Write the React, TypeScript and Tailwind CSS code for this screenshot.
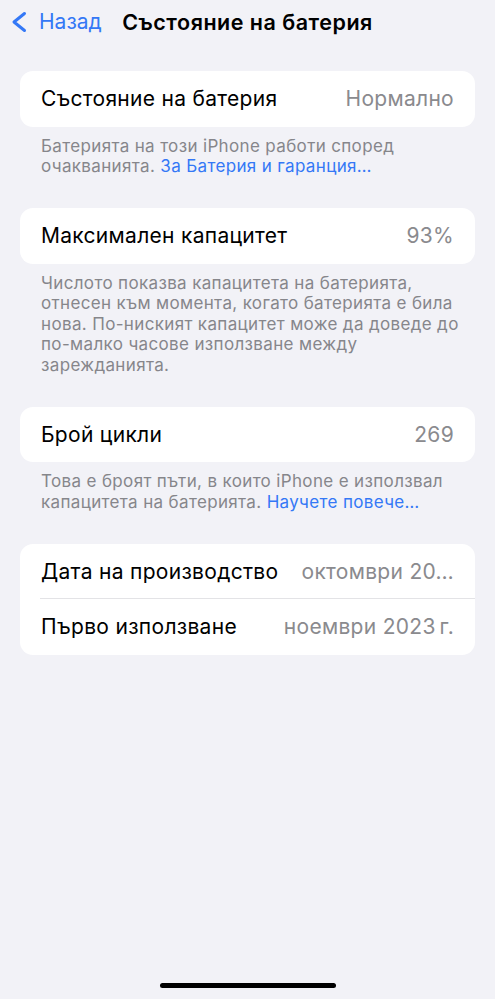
import React from 'react';

const font = { fontFamily: 'Inter, "Noto Sans", "Liberation Sans", sans-serif' };

function Row({ label, value, divider }: { label: string; value: string; divider?: boolean }) {
  return (
    <div className="relative flex h-[55.5px] items-center justify-between pl-[21px] pr-[21px]">
      <span className="text-[21px] tracking-[0.3px] text-black whitespace-nowrap">{label}</span>
      <span className="text-[21px] tracking-[0.3px] text-[#8a8a8e] whitespace-nowrap">{value}</span>
      {divider && <div className="absolute bottom-0 left-[20px] right-0 h-px bg-[#e3e3e6]" />}
    </div>
  );
}

function Card({ children }: { children: React.ReactNode }) {
  return <div className="overflow-hidden rounded-[13px] bg-white">{children}</div>;
}

function Footer({ children }: { children: React.ReactNode }) {
  return (
    <p className="mt-[9px] mb-[31.5px] px-[21px] text-[17px] leading-[20.5px] tracking-[0.35px] text-[#86868b] whitespace-nowrap">
      {children}
    </p>
  );
}

export default function App() {
  return (
    <div lang="bg" style={font} className="flex h-[999px] w-full flex-col bg-[#f2f2f7]">
      {/* Navigation bar */}
      <div className="grid h-[44px] grid-cols-[1fr_auto_1fr] items-center">
        <button className="flex items-center gap-[12px] pl-[11px] text-[#3478f6]">
          <svg width="16" height="22" viewBox="0 0 16 22" fill="none">
            <path d="M13.5 2.5 3 11l10.5 8.5" stroke="currentColor" strokeWidth="3" strokeLinecap="round" strokeLinejoin="round" />
          </svg>
          <span className="text-[21px]">Назад</span>
        </button>
        <h1 className="text-[21.5px] font-semibold tracking-[0.5px] text-black">Състояние на батерия</h1>
        <div />
      </div>

      {/* Content */}
      <div className="mt-[27px] px-[20px]">
        <Card>
          <Row label="Състояние на батерия" value="Нормално" />
        </Card>
        <Footer>
          Батерията на този iPhone работи според
          <br />
          очакванията. <span className="text-[#3478f6]">За Батерия и гаранция…</span>
        </Footer>

        <Card>
          <Row label="Максимален капацитет" value="93%" />
        </Card>
        <Footer>
          Числото показва капацитета на батерията,
          <br />
          отнесен към момента, когато батерията е била
          <br />
          нова. По-ниският капацитет може да доведе до
          <br />
          по-малко часове използване между
          <br />
          зарежданията.
        </Footer>

        <Card>
          <Row label="Брой цикли" value="269" />
        </Card>
        <Footer>
          Това е броят пъти, в които iPhone е използвал
          <br />
          капацитета на батерията. <span className="text-[#3478f6]">Научете повече…</span>
        </Footer>

        <Card>
          <Row label="Дата на производство" value="октомври 20…" divider />
          <Row label="Първо използване" value={'ноември 2023\u202Fг.'} />
        </Card>
      </div>

      {/* Home indicator */}
      <div className="mt-auto flex justify-center pb-[11px]">
        <div className="h-[5px] w-[176px] rounded-full bg-black" />
      </div>
    </div>
  );
}
